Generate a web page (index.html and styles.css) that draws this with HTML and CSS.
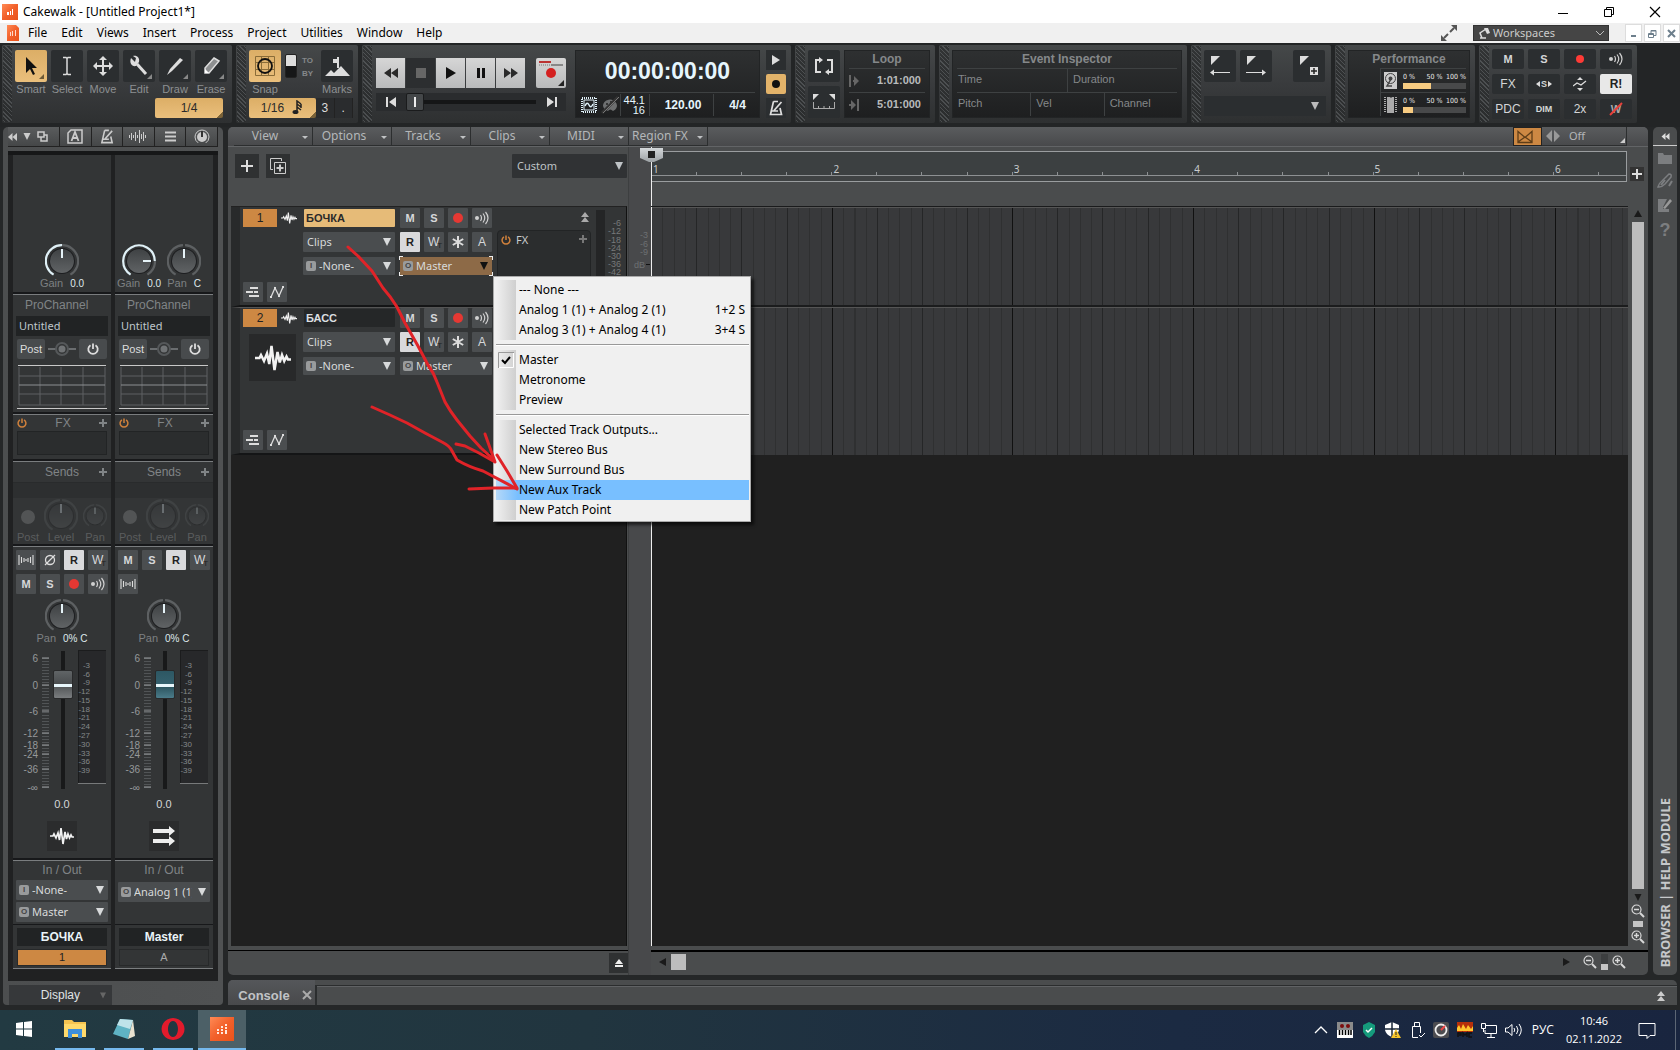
FILE: index.html
```html
<!DOCTYPE html>
<html lang="en">
<head>
<meta charset="utf-8">
<title>Cakewalk - [Untitled Project1*]</title>
<link rel="stylesheet" href="styles.css">
</head>
<body>
<svg class="defs" aria-hidden="true">
  <defs>
    <linearGradient id="g-dial" x1="0" y1="0" x2="0" y2="1"><stop offset="0" stop-color="#3f4244"/><stop offset="1" stop-color="#606365"/></linearGradient>
    <linearGradient id="g-app" x1="0" y1="0" x2="1" y2="1"><stop offset="0" stop-color="#ff8a55"/><stop offset=".5" stop-color="#f2602a"/><stop offset="1" stop-color="#e9531a"/></linearGradient>
    <linearGradient id="g-head" x1="0" y1="0" x2="0" y2="1"><stop offset="0" stop-color="#d4d8da"/><stop offset="1" stop-color="#9da2a5"/></linearGradient>
  </defs>
  <symbol id="knob-mid" viewBox="0 0 34 34"><path d="M17 1.2A15.8 15.8 0 0 1 25.4 30.6" fill="none" stroke="#5d6062" stroke-width="2.2"/><path d="M8.6 30.6A15.8 15.8 0 0 1 17 1.2" fill="none" stroke="#dff0f6" stroke-width="2.2"/><circle cx="17" cy="17" r="13" fill="#1d1e20"/><circle cx="17" cy="17" r="12" fill="url(#g-dial)"/><path d="M17 5v9" stroke="#e6f3f8" stroke-width="2"/></symbol>
  <symbol id="knob-right" viewBox="0 0 34 34"><path d="M33 17A15.8 15.8 0 0 1 25.4 30.6" fill="none" stroke="#5d6062" stroke-width="2.2"/><path d="M8.6 30.6A15.8 15.8 0 1 1 32.8 17" fill="none" stroke="#dff0f6" stroke-width="2.2"/><circle cx="17" cy="17" r="13" fill="#1d1e20"/><circle cx="17" cy="17" r="12" fill="url(#g-dial)"/><path d="M21 17h8" stroke="#e6f3f8" stroke-width="2"/></symbol>
  <symbol id="knob-pan" viewBox="0 0 34 34"><path d="M18 1.2A15.8 15.8 0 0 1 25.4 30.6M8.6 30.6A15.8 15.8 0 0 1 16 1.2" fill="none" stroke="#5d6062" stroke-width="2.2"/><circle cx="17" cy="17" r="13" fill="#1d1e20"/><circle cx="17" cy="17" r="12" fill="url(#g-dial)"/><path d="M17 5v9" stroke="#e6f3f8" stroke-width="2"/></symbol>
  <symbol id="wave" viewBox="0 0 24 20"><path d="M0 10h3l1-2 2 4 2-5 1.500 7L11 2l2 16 2-12 1.500 7 1.500-5 1.500 4 1.500-3 1 2h2" fill="none" stroke="#f2f2f2" stroke-width="1.700"/></symbol>
  <symbol id="echo" viewBox="0 0 16 14"><circle cx="3" cy="7" r="2" fill="#d0d0d0"/><path d="M6.500 4q2 3 0 6M9 2.500q3.500 4.500 0 9M11.500 1q5 6 0 12" fill="none" stroke="#d0d0d0" stroke-width="1.200"/></symbol>
  <symbol id="interleave" viewBox="0 0 16 10"><path d="M1 0v10M15 0v10M3.500 2v6M12.500 2v6M6 3v4M10 3v4M8 4v2" stroke="#dcdcdc" stroke-width="1.100"/></symbol>
  <symbol id="power" viewBox="0 0 12 12"><path d="M3.500 2.200a4.700 4.700 0 1 0 5 0M6 .5v5.500" fill="none" stroke="currentColor" stroke-width="1.800"/></symbol>
  <symbol id="plus" viewBox="0 0 8 8"><path d="M4 0v8M0 4h8" stroke="currentColor" stroke-width="2"/></symbol>
  <symbol id="tri" viewBox="0 0 8 8"><path d="M0 0h8L4 8z" fill="currentColor"/></symbol>
  <symbol id="metro" viewBox="0 0 14 16"><path d="M4.500 1.500h4.500M4.500 1.500L1.500 14.500h11L11 8M5 10.500L12.500 2M3 11h6" fill="none" stroke="currentColor" stroke-width="1.700"/></symbol>
  <symbol id="back2" viewBox="0 0 16 14"><path d="M8 0v14L0 7zM16 0v14L8 7z" fill="currentColor"/></symbol>
  <symbol id="up2" viewBox="0 0 8 10"><path d="M0 5h8L4 0zM0 10h8L4 5z" fill="currentColor"/></symbol>
  <symbol id="takes" viewBox="0 0 14 12"><path d="M4 2h8M0 6h7M8 6h4M3 10h10" stroke="#ddd" stroke-width="2"/></symbol>
  <symbol id="auto" viewBox="0 0 14 12"><path d="M1 11L5 2l4 8 4-9" fill="none" stroke="#ddd" stroke-width="1.300"/><path d="M0 10h2v2H0zM4 1h2v2H4zM8 9h2v2H8zM12 0h2v2h-2z" fill="#ddd"/></symbol>
  <symbol id="star" viewBox="0 0 12 12"><path d="M6 0v12M.8 3l10.400 6M.8 9l10.400-6" stroke="#ddd" stroke-width="2"/></symbol>
  <symbol id="zoomout" viewBox="0 0 14 14"><circle cx="5.500" cy="5.500" r="4.500" fill="none" stroke="#d8d8d8" stroke-width="1.200"/><path d="M3 5.500h5" stroke="#d8d8d8" stroke-width="1.500"/><path d="M9 9l4 4" stroke="#d8d8d8" stroke-width="2"/></symbol>
  <symbol id="zoomin" viewBox="0 0 14 14"><circle cx="5.500" cy="5.500" r="4.500" fill="none" stroke="#d8d8d8" stroke-width="1.200"/><path d="M3 5.500h5M5.500 3v5" stroke="#d8d8d8" stroke-width="1.500"/><path d="M9 9l4 4" stroke="#d8d8d8" stroke-width="2"/></symbol>
  <symbol id="eq" viewBox="0 0 90 44"><path d="M1 0h88v1H1zM0 43h90v1H0z" fill="#c8c8c8"/><path d="M2 2v38h86V2M2 11h86M2 29h86M23 2v38M44 2v38M66 2v38" fill="none" stroke="#5f6162"/><path d="M2 20h86" stroke="#8d9092"/></symbol>
  <symbol id="route" viewBox="0 0 28 14"><path d="M0 7h8M20 7h8" stroke="#6a6d6f" stroke-width="2"/><circle cx="14" cy="7" r="6" fill="none" stroke="#55585a" stroke-width="2"/><circle cx="14" cy="7" r="3.500" fill="#707375"/></symbol>
</svg>

<header class="titlebar">
  <svg width="16" height="16" viewBox="0 0 16 16"><path d="M0 0h16v16H0z" fill="url(#g-app)"/><path d="M5 8h2v3H5zM8 7h1v4H8zM10 5h1v6h-1z" fill="#fff"/></svg>
  <h1>Cakewalk - [Untitled Project1*]</h1>
  <div class="winbtns">
    <button aria-label="Minimize"><svg width="12" height="12"><path d="M1 7.500h10" stroke="#000"/></svg></button>
    <button aria-label="Restore"><svg width="12" height="12" fill="none" stroke="#000"><path d="M1.500 3.500h7v7h-7zM3.500 3V1.500h7v7H9"/></svg></button>
    <button aria-label="Close"><svg width="12" height="12"><path d="M1 1l10 10M11 1L1 11" stroke="#000" stroke-width="1.200"/></svg></button>
  </div>
</header>

<nav class="menubar">
  <svg width="12" height="16" viewBox="0 0 12 16"><path d="M0 0h9l3 3v13H0z" fill="url(#g-app)"/><path d="M3 7h1v4H3zM5 6h1v5H5zM8 5h1v6H8z" fill="#ffd9c8"/></svg>
  <a href="#file">File</a><a href="#edit">Edit</a><a href="#views">Views</a><a href="#insert">Insert</a><a href="#process">Process</a><a href="#project">Project</a><a href="#utilities">Utilities</a><a href="#window">Window</a><a href="#help">Help</a>
  <div class="menu-right">
    <svg width="16" height="16"><path d="M10 0h6v6zM0 10v6h6z" fill="#555"/><path d="M3 13l4-4M9 7l4-4" stroke="#555" stroke-width="2"/></svg>
    <button class="workspaces"><svg width="12" height="12"><path d="M2 11h6M4 11L2 6l6-4" stroke="#ddd" stroke-width="1.500" fill="none"/><path d="M6 1l4 0 2 5-3 1z" fill="#ddd"/></svg><span>Workspaces</span><svg width="8" height="6"><path d="M0 1l4 4 4-4" fill="none" stroke="#bbb"/></svg></button>
    <div class="mdi">
      <button aria-label="Minimize document"><svg width="9" height="9"><path d="M2 7h5" stroke="#6d7f8c" stroke-width="2"/></svg></button>
      <button aria-label="Restore document"><svg width="9" height="9" fill="none" stroke="#6d7f8c"><path d="M.5 4.500h5v4h-5zM.5 5.500h5M3 4V1.500h5v5H6M3 2h5"/></svg></button>
      <button aria-label="Close document"><svg width="9" height="9"><path d="M1 1l7 7M8 1L1 8" stroke="#6d7f8c" stroke-width="2"/></svg></button>
    </div>
  </div>
</nav>

<section class="toolbar" aria-label="Control bar">
  <div class="module m-tools">
    <div class="tools">
      <button class="tool on"><i><svg width="32" height="32"><path d="M11 7v16l4-4 3 6 2-1-3-6h5z" fill="#111"/><path d="M29 24v5h-5z" fill="#6e5a36"/></svg></i>Smart</button>
      <button class="tool"><i><svg width="32" height="32"><path d="M12 7.500h3l1 1 1-1h3M12 24.500h3l1-1 1 1h3M16 8v16" fill="none" stroke="#ddd" stroke-width="1.500"/></svg></i>Select</button>
      <button class="tool"><i><svg width="32" height="32"><path d="M16 9v14M9 16h14" stroke="#ddd" stroke-width="2"/><path d="M16 6l4 4h-8zM16 26l4-4h-8zM6 16l4-4v8zM26 16l-4-4v8z" fill="#ddd"/></svg></i>Move</button>
      <button class="tool"><i><svg width="32" height="32"><path d="M14 14l9 10" stroke="#ddd" stroke-width="3"/><path d="M8 8l4 4 1-4-3-2c4-1 7 2 6 6l-3 4c-4 1-7-3-5-8z" fill="#ddd"/><path d="M29 24v5h-5z" fill="#888"/></svg></i>Edit</button>
      <button class="tool"><i><svg width="32" height="32"><path d="M21 8l3 2L13 21l-5 4 3-6z" fill="#ddd"/><path d="M29 24v5h-5z" fill="#888"/></svg></i>Draw</button>
      <button class="tool"><i><svg width="32" height="32"><path d="M19 8l5 3-10 12h-4l0-5z" fill="#8d8f90" stroke="#ddd" stroke-width="1.500"/><path d="M10 19l4 4h-4z" fill="#fff"/><path d="M29 24v5h-5z" fill="#888"/></svg></i>Erase</button>
    </div>
    <button class="amber quarter">1/4</button>
  </div>
  <div class="module m-snap">
    <div class="tools">
      <button class="tool on"><i><svg width="32" height="32" fill="none"><path d="M6.500 6.500h19v19h-19zM12.500 6v20M19.500 6v20M6 12.500h20M6 19.500h20" stroke="#8a6c38"/><circle cx="16" cy="16" r="7" stroke="#111" stroke-width="1.800"/></svg></i>Snap</button>
      <div class="toby"><span class="sw"></span><p>TO<br>BY</p></div>
      <button class="tool"><i><svg width="32" height="32"><path d="M4 26l6-6 3 3 7-7 9 10z" fill="#ddd"/><path d="M12 9h6v4h-6zM16 7h2v11h-2z" fill="#ddd"/></svg></i>Marks</button>
    </div>
    <div class="snaprow"><button class="amber">1/16 <svg width="12" height="16"><path d="M5 12V1l4 3M5 4l4 3M9 4v4M5 7l4 3" stroke="#222" fill="none" stroke-width="1.500"/><ellipse cx="3.500" cy="12" rx="3" ry="2" fill="#222"/></svg></button><button class="dark">3</button><button class="dark">.</button></div>
  </div>
  <div class="module m-transport">
    <div class="trans">
      <div class="row">
        <button aria-label="Rewind"><svg width="14" height="10"><path d="M7 0v10L0 5zM14 0v10L7 5z" fill="#2a2a2a"/></svg></button>
        <button class="stop" aria-label="Stop"><svg width="10" height="10"><path d="M0 0h10v10H0z" fill="#666"/></svg></button>
        <button aria-label="Play"><svg width="10" height="12"><path d="M0 0l10 6-10 6z" fill="#111"/></svg></button>
        <button aria-label="Pause"><svg width="8" height="10"><path d="M0 0h3v10H0zM5 0h3v10H5z" fill="#111"/></svg></button>
        <button aria-label="Forward"><svg width="14" height="10"><path d="M0 0v10l7-5zM7 0v10l7-5z" fill="#2a2a2a"/></svg></button>
        <button class="rec" aria-label="Record"><svg width="30" height="30"><path d="M3 3h12v2H3z" fill="#b33"/><path d="M15 6h12v2H15z" fill="#888"/><path d="M3 7h12" stroke="#777" stroke-dasharray="1 1"/><circle cx="15" cy="15" r="5" fill="#d42020"/><path d="M28 22v6h-6z" fill="#222"/></svg></button>
      </div>
      <div class="row seek">
        <button aria-label="Go to start"><svg width="10" height="10"><path d="M0 0h2v10H0zM10 0v10L3 5z" fill="#ddd"/></svg></button>
        <input type="range" class="seekbar" aria-label="Position" value="0">
        <button aria-label="Go to end"><svg width="10" height="10"><path d="M8 0h2v10H8zM0 0v10l7-5z" fill="#ddd"/></svg></button>
      </div>
    </div>
    <div class="lcd clock">
      <div class="time">00:00:00:00</div>
      <div class="clockrow">
        <span class="c-icons"><svg width="16" height="16"><path d="M1 1h14v14H1z" fill="none" stroke="#dff0f8" stroke-width="2" stroke-dasharray="1 1"/><path d="M3 3h10v10H3z" fill="none" stroke="#dff0f8"/><path d="M4 9q2-5 4-1t4-1" fill="none" stroke="#dff0f8" stroke-width="1.500"/></svg><svg width="18" height="18"><path d="M2 10a7 6 0 1 1 10 5q-3-3-5 0-4-1-5-5z" fill="#6d6f70"/><circle cx="6" cy="8" r="1" fill="#222"/><circle cx="10" cy="6" r="1" fill="#222"/><path d="M1 17L17 1" stroke="#333" stroke-width="3"/><path d="M2 17L18 1" stroke="#777"/></svg></span>
        <span class="c-rate">44.1<br>16</span><span class="c-tempo">120.00</span><span class="c-sig">4/4</span>
      </div>
    </div>
    <div class="side">
      <button aria-label="Audio engine"><svg width="8" height="10"><path d="M0 0l8 5-8 5z" fill="#ddd"/></svg></button>
      <button class="amber" aria-label="Record metronome"><svg width="10" height="10"><circle cx="5" cy="5" r="4" fill="#111"/></svg></button>
      <button aria-label="Metronome"><svg width="14" height="16" color="#ddd"><use href="#metro"/></svg></button>
    </div>
  </div>
  <div class="module m-loop">
    <div class="col2">
      <button class="sq" aria-label="Loop"><svg width="20" height="18" fill="none" stroke="#ddd" stroke-width="2"><path d="M6 3H2v12h5M14 15h4V3h-5"/><path d="M5 0l4 3-4 3zM15 12l-4 3 4 3z" fill="#ddd" stroke="none"/></svg></button>
      <button class="sq" aria-label="Set loop"><svg width="22" height="16"><path d="M0 0h6L0 6zM22 0h-6l6 6z" fill="#ddd"/><path d="M.5 8v6.500h21V8M5.500 12v3M11 12v3M16.500 12v3" stroke="#aaa" fill="none"/></svg></button>
    </div>
    <div class="lcd">
      <h2>Loop</h2>
      <div class="lrow"><svg width="10" height="12"><path d="M1 0v12M4 6h3" stroke="#666" stroke-width="2"/><path d="M5 1l5 5-5 5z" fill="#666"/></svg>1:01:000</div>
      <div class="lrow"><svg width="10" height="12"><path d="M9 0v12M0 6h3" stroke="#666" stroke-width="2"/><path d="M2 1l5 5-5 5z" fill="#666"/></svg>5:01:000</div>
    </div>
  </div>
  <div class="module m-event">
    <div class="lcd">
      <h2>Event Inspector</h2>
      <div class="erow two"><span>Time</span><span>Duration</span></div>
      <div class="erow three"><span>Pitch</span><span>Vel</span><span>Channel</span></div>
    </div>
  </div>
  <div class="module m-marker">
    <div class="tools">
      <button class="sq" aria-label="Previous marker"><svg width="20" height="20"><path d="M1 0h9L1 9z" fill="#ddd"/><path d="M2 16.500h18" stroke="#ddd"/><path d="M0 16.500l4-3v6z" fill="#ddd"/></svg></button>
      <button class="sq" aria-label="Next marker"><svg width="20" height="20"><path d="M1 0h9L1 9z" fill="#ddd"/><path d="M0 16.500h18" stroke="#ddd"/><path d="M20 16.500l-4-3v6z" fill="#ddd"/></svg></button>
      <button class="sq last" aria-label="Add marker"><svg width="20" height="20"><path d="M1 0h9L1 9z" fill="#ddd"/><path d="M11 11h8v8h-8z" fill="#ddd"/><path d="M15 12v6M12 15h6" stroke="#222" stroke-width="1.500"/></svg></button>
    </div>
    <button class="markersel" aria-label="Markers"><svg width="8" height="8" color="#bbb"><use href="#tri"/></svg></button>
  </div>
  <div class="module m-perf">
    <div class="lcd">
      <h2>Performance</h2>
      <div class="prow"><svg width="13" height="17"><path d="M0 0h13v17H0z" fill="#ccc"/><circle cx="6.500" cy="6.500" r="5" fill="none" stroke="#444"/><circle cx="6.500" cy="6.500" r="2" fill="#444"/><path d="M7 7l-4 7h5" stroke="#444" fill="none" stroke-width="1.500"/></svg><div><p><span>0 %</span><span>50 %</span><span>100 %</span></p><div class="bar"><span style="width:45%"></span></div></div></div>
      <div class="prow"><svg width="13" height="17"><path d="M3 1h3l1 1 1-1h2v16H3z" fill="#aaa"/><path d="M1 1v16M12 1v16" stroke="#aaa" stroke-width="2" stroke-dasharray="1 1"/></svg><div><p><span>0 %</span><span>50 %</span><span>100 %</span></p><div class="bar"><span style="width:16%"></span></div></div></div>
    </div>
  </div>
  <div class="module m-mix">
    <button>M</button><button>S</button><button aria-label="Arm"><svg width="10" height="10"><circle cx="5" cy="5" r="4" fill="#ff3b36"/></svg></button><button aria-label="Input echo"><svg width="16" height="14"><use href="#echo"/></svg></button>
    <button class="fx">FX</button><button class="tiny"><svg width="4" height="6"><path d="M4 0v6L0 3z" fill="#ddd"/></svg>S<svg width="4" height="6"><path d="M0 0v6l4-3z" fill="#ddd"/></svg></button><button aria-label="Automation"><svg width="14" height="14"><path d="M7 0l3 3H4zM7 14l3-3H4z" fill="#ddd"/><path d="M0 9l4-3 4 2 5-4" fill="none" stroke="#ddd" stroke-width="1.300"/></svg></button><button class="white">R!</button>
    <button class="fx">PDC</button><button class="tiny">DIM</button><button class="fx">2x</button><button class="struck">W<svg width="14" height="14"><path d="M1 13L13 1" stroke="#e8403c" stroke-width="2"/></svg></button>
  </div>
</section>

<main class="work">
  <aside class="inspector" aria-label="Inspector">
    <div class="insp-tabs">
      <button class="wide" aria-label="Collapse"><svg width="9" height="8"><use href="#back2"/></svg><svg width="8" height="7"><use href="#tri"/></svg><svg width="11" height="11" fill="none" stroke="currentColor" stroke-width="1.500"><path d="M1 1h6v5H1zM4 6v4h6V4H7"/></svg></button>
      <button aria-label="Arpeggiator"><svg width="16" height="15"><path d="M4 1h11v13H1V4z" fill="none" stroke="currentColor" stroke-width="1.500"/><path d="M4.500 12L8 3l3.500 9M6 9h4" fill="none" stroke="currentColor" stroke-width="1.800"/></svg></button>
      <button aria-label="Metronome"><svg width="14" height="15"><use href="#metro"/></svg></button>
      <button aria-label="Clip"><svg width="18" height="13"><path d="M.5 5v3M2.500 3v7M4.500 5v3M6.500 2v9M8.500 5v3M10.500 0v13M12.500 4v5M14.500 2v9M16.500 5v3" stroke="currentColor"/></svg></button>
      <button aria-label="Track"><svg width="11" height="11"><path d="M0 1.500h11M0 5.500h11M0 9.500h11" stroke="currentColor" stroke-width="2"/></svg></button>
      <button aria-label="ProChannel"><svg width="16" height="16"><circle cx="8" cy="8" r="5" fill="currentColor"/><circle cx="8" cy="8" r="7" fill="none" stroke="currentColor" stroke-dasharray="36 8" stroke-dashoffset="-15"/><path d="M8 2v6" stroke="#333" stroke-width="2"/></svg></button>
    </div>
    <div class="strips">
      <article class="strip">
        <section class="s-gain"><div class="knobs"><figure><svg width="34" height="34"><use href="#knob-mid"/></svg><figcaption>Gain<b>0.0</b></figcaption></figure></div></section>
        <section class="s-pro"><h3>ProChannel</h3><div class="preset">Untitled</div><div class="prorow"><button>Post</button><svg width="28" height="14"><use href="#route"/></svg><button aria-label="ProChannel power"><svg width="12" height="12"><use href="#power"/></svg></button></div><svg class="eq" width="90" height="44"><use href="#eq"/></svg></section>
        <section class="s-fx"><div class="shead"><svg width="10" height="10" color="#d0813c"><use href="#power"/></svg><span>FX</span><svg width="8" height="8"><use href="#plus"/></svg></div><div class="well"></div></section>
        <section class="s-sends"><div class="shead"><i></i><span>Sends</span><svg width="8" height="8"><use href="#plus"/></svg></div><div class="dim"></div><div class="sendrow"><figure><svg width="14" height="14"><circle cx="7" cy="7" r="7" fill="#9a9c9e"/></svg><figcaption>Post</figcaption></figure><figure><svg width="34" height="34"><use href="#knob-pan"/></svg><figcaption>Level</figcaption></figure><figure><svg width="24" height="24"><use href="#knob-pan"/></svg><figcaption>Pan</figcaption></figure></div></section>
        <section class="s-mix">
          <div class="btngrid"><button aria-label="Interleave"><svg width="16" height="10"><use href="#interleave"/></svg></button><button aria-label="Phase"><svg width="12" height="12" fill="none" stroke="#ddd" stroke-width="1.300"><circle cx="6" cy="6" r="4.500"/><path d="M1 11L11 1"/></svg></button><button class="white">R</button><button class="w">W<sub>T</sub></button><button>M</button><button>S</button><button aria-label="Record arm"><svg width="10" height="10"><circle cx="5" cy="5" r="5" fill="#e53833"/></svg></button><button aria-label="Input echo"><svg width="16" height="14"><use href="#echo"/></svg></button></div>
          <figure class="pan"><svg width="34" height="34"><use href="#knob-pan"/></svg><figcaption>Pan<b>0% C</b></figcaption></figure>
          <div class="faderrow">
            <svg width="40" height="142"><path d="M32.500 8v130" stroke="#515456" stroke-width="7" stroke-dasharray="1 2"/><path d="M29 8h7M29 35h7M29 61h7M29 83h7M29 95h7M29 104h7M29 119h7M29 137h7" stroke="#9a9d9f"/><g class="scale-text"><text x="25" y="12">6</text><text x="25" y="39">0</text><text x="25" y="65">-6</text><text x="25" y="87">-12</text><text x="25" y="99">-18</text><text x="25" y="108">-24</text><text x="25" y="123">-36</text><text x="25" y="141">-∞</text></g></svg>
            <input type="range" class="fader" aria-label="Volume" value="83">
            <svg class="mtr" width="28" height="134"><path d="M0 0h28v134H0z" fill="#27282a"/><path d="M0 133.500h28" stroke="#77797a"/><path d="M.5 0v133M0 .5h28" stroke="#1b1c1d"/><g class="meter-text"><text x="12" y="18">-3</text><text x="12" y="27">-6</text><text x="12" y="35">-9</text><text x="12" y="44">-12</text><text x="12" y="53">-15</text><text x="12" y="62">-18</text><text x="12" y="70">-21</text><text x="12" y="79">-24</text><text x="12" y="88">-27</text><text x="12" y="97">-30</text><text x="12" y="106">-33</text><text x="12" y="114">-36</text><text x="12" y="123">-39</text></g></svg>
          </div>
          <output>0.0</output>
          <div class="trackicon"><svg width="24" height="20"><use href="#wave"/></svg></div>
        </section>
        <section class="s-io"><h3>In / Out</h3>
          <label class="combo"><span class="badge">I</span><select aria-label="Input"><option>-None-</option></select><svg width="8" height="8"><use href="#tri"/></svg></label>
          <label class="combo"><span class="badge">O</span><select aria-label="Output"><option>Master</option></select><svg width="8" height="8"><use href="#tri"/></svg></label>
        </section>
        <section class="s-name"><strong>БОЧКА</strong><span class="num orange">1</span></section>
      </article>
      <article class="strip">
        <section class="s-gain"><div class="knobs pair"><figure><svg width="34" height="34"><use href="#knob-right"/></svg><figcaption>Gain<b>0.0</b></figcaption></figure><figure><svg width="34" height="34"><use href="#knob-pan"/></svg><figcaption>Pan<b>C</b></figcaption></figure></div></section>
        <section class="s-pro"><h3>ProChannel</h3><div class="preset">Untitled</div><div class="prorow"><button>Post</button><svg width="28" height="14"><use href="#route"/></svg><button aria-label="ProChannel power"><svg width="12" height="12"><use href="#power"/></svg></button></div><svg class="eq" width="90" height="44"><use href="#eq"/></svg></section>
        <section class="s-fx"><div class="shead"><svg width="10" height="10" color="#d0813c"><use href="#power"/></svg><span>FX</span><svg width="8" height="8"><use href="#plus"/></svg></div><div class="well"></div></section>
        <section class="s-sends"><div class="shead"><i></i><span>Sends</span><svg width="8" height="8"><use href="#plus"/></svg></div><div class="dim"></div><div class="sendrow"><figure><svg width="14" height="14"><circle cx="7" cy="7" r="7" fill="#9a9c9e"/></svg><figcaption>Post</figcaption></figure><figure><svg width="34" height="34"><use href="#knob-pan"/></svg><figcaption>Level</figcaption></figure><figure><svg width="24" height="24"><use href="#knob-pan"/></svg><figcaption>Pan</figcaption></figure></div></section>
        <section class="s-mix">
          <div class="btngrid"><button>M</button><button>S</button><button class="white">R</button><button class="w">W<sub>T</sub></button><button aria-label="Interleave"><svg width="16" height="10"><use href="#interleave"/></svg></button></div>
          <figure class="pan"><svg width="34" height="34"><use href="#knob-pan"/></svg><figcaption>Pan<b>0% C</b></figcaption></figure>
          <div class="faderrow">
            <svg width="40" height="142"><path d="M32.500 8v130" stroke="#515456" stroke-width="7" stroke-dasharray="1 2"/><path d="M29 8h7M29 35h7M29 61h7M29 83h7M29 95h7M29 104h7M29 119h7M29 137h7" stroke="#9a9d9f"/><g class="scale-text"><text x="25" y="12">6</text><text x="25" y="39">0</text><text x="25" y="65">-6</text><text x="25" y="87">-12</text><text x="25" y="99">-18</text><text x="25" y="108">-24</text><text x="25" y="123">-36</text><text x="25" y="141">-∞</text></g></svg>
            <input type="range" class="fader teal" aria-label="Volume" value="83">
            <svg class="mtr" width="28" height="134"><path d="M0 0h28v134H0z" fill="#27282a"/><path d="M0 133.500h28" stroke="#77797a"/><path d="M.5 0v133M0 .5h28" stroke="#1b1c1d"/><g class="meter-text"><text x="12" y="18">-3</text><text x="12" y="27">-6</text><text x="12" y="35">-9</text><text x="12" y="44">-12</text><text x="12" y="53">-15</text><text x="12" y="62">-18</text><text x="12" y="70">-21</text><text x="12" y="79">-24</text><text x="12" y="88">-27</text><text x="12" y="97">-30</text><text x="12" y="106">-33</text><text x="12" y="114">-36</text><text x="12" y="123">-39</text></g></svg>
          </div>
          <output>0.0</output>
          <div class="trackicon"><svg width="24" height="20"><path d="M1 3h16V0l6 5-6 5V7H1zM1 13h16v-3l6 5-6 5v-3H1z" fill="#eee"/></svg></div>
        </section>
        <section class="s-io single"><h3>In / Out</h3>
          <label class="combo"><span class="badge">O</span><select aria-label="Output"><option>Analog 1 (1) + Analog 2 (1)</option></select><svg width="8" height="8"><use href="#tri"/></svg></label>
        </section>
        <section class="s-name"><strong>Master</strong><span class="num">A</span></section>
      </article>
    </div>
    <button class="display">Display<svg width="6" height="7" color="#666"><use href="#tri"/></svg></button>
  </aside>

  <section class="tracks" aria-label="Track view">
    <div class="tv-menu">
      <button>View</button><button>Options</button><button>Tracks</button><button>Clips</button><button>MIDI</button><button>Region FX</button>
      <div class="tv-right"><button class="xfade" aria-label="Crossfade"><svg width="16" height="14"><path d="M1 1.500l7 6 7-6v11H1zM1 12l7-5 7 5" fill="none" stroke="#5e3d18" stroke-width="1.300"/></svg></button><button class="off"><svg width="14" height="14"><path d="M6 1v12L0 7zM8 1v12l6-6z" fill="#999"/></svg><span>Off</span><svg class="corner" width="5" height="5"><path d="M5 0v5H0z" fill="#ccc"/></svg></button></div>
    </div>
    <div class="tv-grid">
      <div class="th-left">
        <button aria-label="Add track"><svg width="12" height="12"><path d="M6 0v12M0 6h12" stroke="#ddd" stroke-width="2"/></svg></button>
        <button aria-label="Duplicate track"><svg width="16" height="16" fill="none" stroke="#ccc"><path d="M4.500 4.500h11v11h-11zM3 11.500H.5V.5h11V3"/><path d="M10 6.500v7M6.500 10h7" stroke-width="2"/></svg></button>
        <label class="combo custom"><select aria-label="Track control preset"><option>Custom</option></select><svg width="8" height="8"><use href="#tri"/></svg></label>
      </div>
      <div class="gutter">
        <svg width="23" height="130"><g class="gut-text"><text x="19" y="12">-3</text><text x="19" y="21">-6</text><text x="19" y="29">-9</text><text x="16" y="42">dB</text></g><path d="M17 38.500h4" stroke="#111"/></svg>
      </div>
      <div class="ruler">
        <div class="rscale"><span>1</span><span>2</span><span>3</span><span>4</span><span>5</span><span>6</span></div>
        <svg class="playhead" width="23" height="15"><path d="M0 0h23v10l-9 4h-5l-9-4z" fill="url(#g-head)"/><path d="M8 3h7v7H8z" fill="#222"/></svg>
      </div>
      <div class="th-right"><button aria-label="Add lane"><svg width="10" height="10"><path d="M5 0v10M0 5h10" stroke="#ddd" stroke-width="2"/></svg></button></div>

      <div class="tlist">
        <article class="track t1">
          <div class="tcontrols">
            <div class="tidx"><span class="tnum">1</span><svg width="16" height="14"><use href="#wave"/></svg></div>
            <input class="tname sel" aria-label="Track 1 name" value="БОЧКА">
            <div class="tb"><button>M</button><button>S</button><button aria-label="Record arm"><svg width="10" height="10"><circle cx="5" cy="5" r="5" fill="#e53833"/></svg></button><button aria-label="Input echo"><svg width="16" height="14"><use href="#echo"/></svg></button></div>
            <i></i>
            <label class="combo"><select aria-label="Edit filter"><option>Clips</option></select><svg width="8" height="8"><use href="#tri"/></svg></label>
            <div class="tb"><button class="white">R</button><button class="w">W<sub>T</sub></button><button aria-label="Freeze"><svg width="12" height="12"><use href="#star"/></svg></button><button class="reg">A</button></div>
            <i></i>
            <label class="combo io"><span class="badge">I</span><select aria-label="Input"><option>-None-</option></select><svg width="8" height="8"><use href="#tri"/></svg></label>
            <div class="outwrap">
              <label class="combo io open"><span class="badge">O</span><select aria-label="Output"><option>Master</option></select><svg width="8" height="8"><use href="#tri"/></svg></label>
              <ul class="popup" role="menu">
                <li role="menuitem">--- None ---</li>
                <li role="menuitem">Analog 1 (1) + Analog 2 (1)<span>1+2 S</span></li>
                <li role="menuitem">Analog 3 (1) + Analog 4 (1)<span>3+4 S</span></li>
                <li class="sep" role="separator"></li>
                <li class="checked" role="menuitem"><svg width="16" height="16" viewBox="0 0 16 16"><path d="M.5 16V.5H16" fill="none" stroke="#999"/><path d="M15.500 1v14.500H1" fill="none" stroke="#fff"/><path d="M4 8l3 3 5-6" fill="none" stroke="#000" stroke-width="2"/></svg>Master</li>
                <li role="menuitem">Metronome</li>
                <li role="menuitem">Preview</li>
                <li class="sep" role="separator"></li>
                <li role="menuitem">Selected Track Outputs...</li>
                <li role="menuitem">New Stereo Bus</li>
                <li role="menuitem">New Surround Bus</li>
                <li class="hot" role="menuitem">New Aux Track</li>
                <li role="menuitem">New Patch Point</li>
              </ul>
            </div>
            <div class="lanes"><button aria-label="Take lanes"><svg width="14" height="12"><use href="#takes"/></svg></button><button aria-label="Automation lanes"><svg width="14" height="12"><use href="#auto"/></svg></button></div>
          </div>
          <div class="fxcol"><svg class="up" width="8" height="10" color="#aaa"><use href="#up2"/></svg><div class="fxbin"><svg width="10" height="10" color="#d0813c"><use href="#power"/></svg><span>FX</span><svg width="8" height="8" color="#777"><use href="#plus"/></svg></div></div>
          <svg class="tmeter" width="32" height="94"><path d="M2 2h9v92H2z" fill="#242526"/><g class="gut-text"><text x="27" y="18">-6</text><text x="27" y="26">-12</text><text x="27" y="35">-18</text><text x="27" y="43">-24</text><text x="27" y="51">-30</text><text x="27" y="59">-36</text><text x="27" y="67">-42</text></g></svg>
        </article>
        <article class="track t2">
          <div class="tcontrols">
            <div class="tidx"><span class="tnum">2</span><svg width="16" height="14"><use href="#wave"/></svg></div>
            <input class="tname" aria-label="Track 2 name" value="БАСС">
            <div class="tb"><button>M</button><button>S</button><button aria-label="Record arm"><svg width="10" height="10"><circle cx="5" cy="5" r="5" fill="#e53833"/></svg></button><button aria-label="Input echo"><svg width="16" height="14"><use href="#echo"/></svg></button></div>
            <div class="bigicon"><svg width="36" height="30"><use href="#wave"/></svg></div>
            <label class="combo"><select aria-label="Edit filter"><option>Clips</option></select><svg width="8" height="8"><use href="#tri"/></svg></label>
            <div class="tb"><button class="white">R</button><button class="w">W<sub>T</sub></button><button aria-label="Freeze"><svg width="12" height="12"><use href="#star"/></svg></button><button class="reg">A</button></div>
            <label class="combo io"><span class="badge">I</span><select aria-label="Input"><option>-None-</option></select><svg width="8" height="8"><use href="#tri"/></svg></label>
            <div class="outwrap"><label class="combo io"><span class="badge">O</span><select aria-label="Output"><option>Master</option></select><svg width="8" height="8"><use href="#tri"/></svg></label></div>
            <div class="lanes"><button aria-label="Take lanes"><svg width="14" height="12"><use href="#takes"/></svg></button><button aria-label="Automation lanes"><svg width="14" height="12"><use href="#auto"/></svg></button></div>
          </div>
        </article>
      </div>

      <div class="clips">
        <div class="lane l1"><i></i><i></i><i></i><i></i><i></i><i></i></div>
        <div class="lane l2"><i></i><i></i><i></i><i></i><i></i><i></i></div>
      </div>

      <div class="vscroll">
        <svg width="8" height="7"><path d="M0 7h8L4 0z" fill="#1a1a1a"/></svg>
        <div class="vthumb"></div>
        <svg width="8" height="7" color="#1a1a1a"><use href="#tri"/></svg>
        <button aria-label="Zoom out vertically"><svg width="14" height="14"><use href="#zoomout"/></svg></button><span class="zbox"></span><button aria-label="Zoom in vertically"><svg width="14" height="14"><use href="#zoomin"/></svg></button>
      </div>

      <div class="foot-left"><button aria-label="Show bus pane"><svg width="8" height="8"><path d="M0 5h8L4 0zM0 6h8v2H0z" fill="#eee"/></svg></button></div>
      <div class="foot-right"><svg width="7" height="8"><path d="M7 0v8L0 4z" fill="#1a1a1a"/></svg><span class="hthumb"></span><div class="hz"><svg width="7" height="8"><path d="M0 0v8l7-4z" fill="#1a1a1a"/></svg><button aria-label="Zoom out"><svg width="14" height="14"><use href="#zoomout"/></svg></button><span class="zslider"></span><button aria-label="Zoom in"><svg width="14" height="14"><use href="#zoomin"/></svg></button></div></div>
    </div>
    <svg class="scribble" width="190" height="260" viewBox="340 240 190 260" aria-hidden="true"><g fill="none" stroke="#e02328" stroke-width="3" stroke-linecap="round" stroke-linejoin="round"><path d="M348 247l10 9 14 15 11 17q8 9 14 19l8 16 13 23 10 19q6 8 9 17l8 20q5 9 12 18l13 16 11 12 12 11"/><path d="M485 434l5 14 5 14-16-9-14-7-9-2"/><path d="M372 407l18 8 17 8 18 10 17 9q8 4 10 9l5 9q12 7 26 11l34 18"/><path d="M469 489l24-1h24l-10-17-10-16"/></g></svg>
  </section>

  <aside class="browser" aria-label="Browser">
    <button aria-label="Expand browser"><svg width="9" height="7" color="#ddd"><use href="#back2"/></svg></button>
    <svg width="14" height="12"><path d="M0 1h5l1 2h8v9H0z" fill="#7c7e80"/></svg>
    <svg width="16" height="16"><path d="M1 14q1-4 4-6l7-7q3 0 2 3l-6 7q-3 3-6 3z" fill="none" stroke="#7c7e80" stroke-width="1.500"/><path d="M4 12l4-5M12 13l3-5" stroke="#7c7e80" stroke-width="2"/></svg>
    <svg width="14" height="14"><path d="M0 1h9L5 9v2h6V7v7H0z" fill="#7c7e80"/><path d="M5 10l7-9 2 2-7 8z" fill="#999"/></svg>
    <span class="q">?</span>
    <div class="vert">BROWSER | HELP MODULE</div>
  </aside>

  <footer class="console"><button>Console<svg width="10" height="10"><path d="M1 1l8 8M9 1L1 9" stroke="#aaa" stroke-width="2"/></svg></button><div><svg width="8" height="10" color="#ccc"><use href="#up2"/></svg></div></footer>
</main>

<footer class="taskbar">
  <button class="tk" aria-label="Start"><svg width="16" height="16"><path d="M0 2l7-1v6.500H0zM8 1l8-1v7.500H8zM0 8.500h7V15l-7-1zM8 8.500h8V16l-8-1z" fill="#fff"/></svg></button>
  <button class="tk run" aria-label="Explorer"><svg width="22" height="20"><path d="M0 1h8l2 2h12v15H0z" fill="#f5c451"/><path d="M0 5h22v13H0z" fill="#ffda6b"/><path d="M4 10h14v9h-4v-4H8v4H4z" fill="#3d8fdb"/></svg></button>
  <button class="tk run" aria-label="Notepad"><svg width="24" height="22"><path d="M8 1l13 1-5 19-15-5z" fill="#5fb3c4"/><path d="M8 1l13 1-3 9L5 7z" fill="#bfe3ea"/><path d="M21 2l2 16-7 3z" fill="#e8e2d0"/></svg></button>
  <button class="tk run" aria-label="Opera"><svg width="24" height="22"><path fill-rule="evenodd" d="M12 0a11.500 11 0 1 0 .1 0zM12 3a5 8 0 1 1-.1 0z" fill="#e31b2c"/></svg></button>
  <button class="tk run act" aria-label="Cakewalk"><svg width="24" height="24"><path d="M0 0h24v24H0z" fill="url(#g-app)"/><path d="M7 12h2v2H7zM7 15h2v2H7zM11 9h2v2h-2zM11 12h2v2h-2zM11 15h2v2h-2zM15 7h2v2h-2zM15 10h2v2h-2zM15 13h2v4h-2z" fill="#ffe8dd"/></svg></button>
  <div class="tray">
    <svg width="16" height="16"><path d="M2 11l6-6 6 6" fill="none" stroke="#fff" stroke-width="1.300"/></svg>
    <svg width="16" height="16"><path d="M0 0h16v8H0z" fill="#8b8b8b"/><path d="M0 8h16v8H0z" fill="#fff"/><circle cx="5" cy="4" r="2" fill="#7d0d0d"/><circle cx="11" cy="4" r="2" fill="#7d0d0d"/><path d="M2.500 8v5M5.500 8v5M8.500 8v5M11.500 8v5M14 8v5" stroke="#000" stroke-width="1.500"/></svg>
    <svg width="16" height="16"><path d="M8 0l6 3v7q-2 4-6 6-4-2-6-6V3z" fill="#159b7c"/><path d="M5 8l2 2 4-4" stroke="#fff" fill="none" stroke-width="1.500"/></svg>
    <svg width="16" height="16"><path d="M7 0l7 3v5q-1 5-7 7-6-2-7-7V3z" fill="#fff"/><path d="M7 0v15M0 7h14" stroke="#1a2738" stroke-width="1.500"/><path d="M11 7l5 9H6z" fill="#f7c52c"/><path d="M11 10v3M11 14v1" stroke="#222"/></svg>
    <svg width="16" height="16" fill="none" stroke="#fff"><path d="M5.500 4V.5h5V4M3.500 15.500v-11h8V11M3.500 15.500H9M10 13l2 2 4-4"/></svg>
    <svg width="16" height="16"><rect width="16" height="16" rx="2" fill="#4c4c50"/><circle cx="8" cy="8" r="5.500" fill="none" stroke="#eee" stroke-width="1.800"/><path d="M8 8l4-4" stroke="#e44" stroke-width="2"/></svg>
    <svg width="16" height="16"><path d="M0 0h16v10H0z" fill="#b6300a"/><path d="M0 9V6l2-3 2 4 2-5 3 5 2-4 3 4 2-3v5z" fill="#ffc62e"/><path d="M1 15v-4h3v2H2M6 15v-4l2 2 2-2v4M15 11h-3v4h3" stroke="#111" fill="none" stroke-width="1.500"/></svg>
    <svg width="16" height="16" fill="none" stroke="#fff"><path d="M5 3.500h10.500v8H4V8M10 12v3M6 15.500h8M.5 1.500h4v5h-4zM2.500 7v3"/></svg>
    <svg width="17" height="14" fill="none" stroke="#fff"><path d="M.5 5h2.500l4-3.500v11L3 9H.5zM9 5q1.500 2 0 4M11.500 3q3 4 0 8M14 1q4.500 6 0 12"/></svg>
    <span class="lang">РУС</span>
    <time>10:46<br>02.11.2022</time>
    <svg class="note" width="18" height="17" fill="none" stroke="#fff"><path d="M1 1.500h16v12h-5l-3 3v-3H1z"/></svg>
  </div>
</footer>
</body>
</html>
```
FILE: styles.css
```css
* { box-sizing: border-box; }
body {
  margin: 0;
  min-height: 100vh;
  display: grid;
  grid-template-rows: 23px 20px 84px 1fr 40px;
  grid-template-columns: minmax(0, 1fr);
  background: #252728;
  font: 11px/13px "Liberation Sans", Arial, sans-serif;
  color: #85888a;
}
.defs { position: absolute; width: 0; height: 0; }
button, select, input { font: inherit; color: inherit; border: 0; padding: 0; margin: 0; background: none; border-radius: 0; }
button { display: flex; align-items: center; justify-content: center; }
svg { display: block; flex: none; }
h1, h2, h3, p, figure, ul { margin: 0; padding: 0; font-weight: normal; }

/* title and menu */
.titlebar { display: flex; align-items: center; gap: 5px; padding: 0 2px; background: #fff; color: #000; }
.titlebar h1 { font: 12px/16px "Noto Sans", "Open Sans", sans-serif; flex: 1; }
.winbtns { display: flex; }
.winbtns button { width: 46px; height: 21px; }
.menubar { display: flex; align-items: center; gap: 14px; padding-left: 7px; background: #f0f0f0; font: 12px/18px "Noto Sans", sans-serif; color: #000; }
.menubar > svg { margin-right: -5px; }
.menubar a { color: #000; text-decoration: none; }
.menu-right { display: flex; align-items: center; gap: 16px; margin-left: auto; }
.workspaces { width: 136px; height: 16px; background: #454545; border: 1px solid #333; color: #ccc; font-size: 11px; gap: 3px; padding: 0 4px; }
.workspaces span { flex: 1; text-align: left; }
.mdi { display: flex; gap: 2px; }
.mdi button { width: 17px; height: 18px; background: #fff; border: 1px solid #ddd; }

/* control bar */
.toolbar { display: flex; gap: 4px; padding: 2px 2px 4px; background: #232526; }
.module {
  display: flex; position: relative; height: 78px; padding: 5px 5px 5px 13px; border-radius: 2px;
  background: linear-gradient(#454849, #393b3d 50%, #2e3031);
}
.module::before {
  content: ""; position: absolute; left: 1px; top: 1px; bottom: 1px; width: 9px;
  background: repeating-linear-gradient(45deg, #292b2c 0 1px, #55585a 1px 2px, #292b2c 2px 3px);
  opacity: .7;
}
.tools { display: flex; gap: 4px; }
.tool { flex-direction: column; justify-content: flex-start; width: 32px; gap: 1px; color: #8d9092; }
.tool i { display: flex; background: #2b2e30; border-radius: 2px; }
.tool.on i, .amber { background: linear-gradient(#dcae66, #eabf7c); border-radius: 2px; }
.m-tools, .m-snap { flex-direction: column; }
.m-tools { width: 230px; }
.quarter { width: 68px; }
.amber { height: 20px; color: #2a2a2a; font-size: 12px; }
.m-tools .amber, .snaprow .amber { background: linear-gradient(135deg, transparent 5px, #7a6238 5px) 100% 100% / 7px 7px no-repeat, linear-gradient(#dcae66, #eabf7c); }
.quarter { margin: 2px 4px 0 auto; }
.m-snap { width: 122px; }
.snaprow { display: flex; margin-top: 2px; }
.snaprow .amber { width: 67px; gap: 8px; }
.snaprow .dark { flex: 1; background: #2a2c2e; color: #ddd; border-right: 1px solid #222; font-size: 12px; }
.toby { display: flex; gap: 5px; width: 32px; height: 24px; margin-top: 4px; }
.toby p { font: bold 8px/13px "Liberation Sans", sans-serif; }
.sw { width: 12px; height: 24px; background: linear-gradient(#ddd 11px, #161718 11px); border: 1px solid #222; border-radius: 2px; }
.sq { width: 32px; height: 32px; background: #2b2e30; border-radius: 2px; }

.m-transport { width: 429px; }
.trans { width: 191px; padding: 8px 0 0 1px; display: flex; flex-direction: column; gap: 5px; }
.trans .row { display: flex; gap: 1px; }
.trans .row button { width: 29px; height: 30px; background: linear-gradient(#d6d6d6, #b9babb); }
.trans .row .stop { background: #2c2e30; }
.trans .row .rec { width: 30px; margin-left: auto; border-radius: 2px; }
.trans .seek { background: #2a2c2e; }
.trans .row.seek button { height: 18px; background: none; }
.seekbar { appearance: none; flex: 1; height: 18px; background: linear-gradient(transparent 7px, #151617 7px 11px, transparent 11px); min-width: 0; margin: 0; }
.seekbar::-webkit-slider-thumb { appearance: none; width: 18px; height: 18px; border: 1px solid #1a1b1c; border-radius: 2px; background: linear-gradient(90deg, transparent 7px, #eee 7px 9px, transparent 9px) 0 3px / 16px 10px no-repeat, #444749; }
.lcd { background: linear-gradient(#2e3031, #1e1f20); border: 1px solid #222425; flex: 1; }
.lcd h2 { font-weight: bold; font-size: 12px; line-height: 17px; text-align: center; color: #85888a; margin: 0 4px; }
.clock { flex: none; width: 185px; margin: 0 6px 0 9px; display: flex; flex-direction: column; }
.time { font: bold 23px/41px "Liberation Sans", sans-serif; text-align: center; color: #e6f6fd; margin: 0 4px; border-bottom: 1px solid #3e4142; }
.clockrow { display: flex; flex: 1; padding: 1px 4px; color: #e6f6fd; align-items: center; }
.clockrow span { border-right: 1px solid #3e4142; height: 22px; display: flex; align-items: center; justify-content: center; }
.clockrow .c-icons { width: 41px; gap: 4px; }
.clockrow .c-rate { width: 29px; display: block; line-height: 10px; text-align: right; padding: 1px 4px 0 0; }
.clockrow .c-tempo { width: 64px; font-weight: bold; font-size: 12px; padding-left: 3px; }
.clockrow .c-sig { flex: 1; font-weight: bold; font-size: 12px; border: 0; padding-left: 6px; }
.side { display: flex; flex-direction: column; justify-content: space-between; width: 20px; }
.side button { height: 20px; background: #2b2e30; }
.side .amber { background: #e3b36a; }

.m-loop { width: 140px; gap: 4px; }
.col2 { display: flex; flex-direction: column; gap: 4px; }
.lrow { display: flex; align-items: center; justify-content: space-between; height: 24px; margin: 0 4px; padding: 0 4px 0 0; border-top: 1px solid #3e4142; font-weight: bold; color: #b9bbbc; }
.m-event { width: 248px; }
.erow { display: grid; height: 24px; margin: 0 4px; border-top: 1px solid #3e4142; }
.two { grid-template-columns: 1fr 1fr; }
.three { grid-template-columns: 1fr 1fr 1fr; }
.erow span { padding: 4px 2px; border-left: 1px solid #3e4142; padding-left: 5px; }
.erow span:first-child { border: 0; padding-left: 1px; }
.m-marker { width: 140px; flex-direction: column; }
.m-marker .last { margin-left: 17px; }
.markersel { margin-top: 14px; height: 20px; background: #2b2e30; justify-content: flex-end; padding-right: 7px; }
.m-perf { width: 140px; }
.prow { display: flex; align-items: center; gap: 6px; height: 24px; margin: 0 3px 0 31px; padding-left: 3px; border-left: 1px solid #3e4142; border-top: 1px solid #3e4142; }
.prow > div { flex: 1; }
.prow p { display: flex; justify-content: space-between; font: 7px/11px "DejaVu Sans Condensed", "DejaVu Sans", sans-serif; color: #e8e8e8; }
.prow p span:nth-child(2) { margin-left: 8px; }
.bar { height: 6px; background: #48494a; }
.bar span { display: block; height: 6px; background: #f7cb81; }
.m-mix { width: 158px; display: grid; grid-template-columns: repeat(4, 32px); grid-auto-rows: 20px; gap: 5px 4px; padding-top: 4px; }
.m-mix button { background: #2b2e30; color: #d4d6d7; font: bold 11px/13px "Liberation Sans", sans-serif; border-radius: 2px; }
.m-mix .fx { font-weight: normal; font-size: 12px; }
.m-mix .tiny { font-size: 9px; gap: 1px; }
.m-mix .white { background: #e8e8e8; color: #222; font-size: 12px; }
.m-mix .struck { position: relative; color: #aaa; }
.struck svg { position: absolute; left: 9px; top: 3px; }

/* work area */
.work { display: grid; grid-template-columns: 220px minmax(0, 1fr) 24px; grid-template-rows: 1fr 25px; gap: 5px; padding: 0 3px 5px; min-height: 0; }
.inspector { grid-row: 1 / 3; background: linear-gradient(90deg, #4c4e4f, #505253); border-radius: 5px 5px 4px 4px; display: flex; flex-direction: column; padding: 0 5px; }
.insp-tabs { display: flex; height: 20px; color: #ccc; border-bottom: 1px solid #222; background: linear-gradient(#5a5c5d, #454748); flex: none; }
.insp-tabs button { flex: 1; border-right: 1px solid #222; }
.insp-tabs .wide { flex: none; width: 52px; gap: 6px; justify-content: flex-start; }
.strips { flex: 1; display: flex; gap: 4px; margin-top: 4px; padding: 0 5px 12px; border-top: 4px solid #161718; background: #202122; }
.strip { width: 98px; background: #333536; display: flex; flex-direction: column; }
.strip > section { border-top: 1px solid #7a7d7f; border-bottom: 2px solid #17181a; }
.strip h3 { font-size: 12px; line-height: 21px; color: #808486; }
.strip .s-gain { flex: 1; border-top: 0; display: flex; flex-direction: column; justify-content: flex-end; }
.knobs { display: flex; justify-content: center; padding-bottom: 3px; }
.knobs.pair { justify-content: flex-start; gap: 6px; padding-left: 2px; }
figure { display: flex; flex-direction: column; align-items: center; }
figcaption { white-space: nowrap; line-height: 11px; color: #7d8082; }
figcaption b { color: #dfe8ec; font-weight: normal; margin-left: 7px; font-size: 10px; }
.s-pro { height: 120px; padding: 0 3px; }
.s-pro h3 { padding-left: 9px; }
.preset { height: 20px; background: #212324; color: #bfc6cb; font: 11px/19px "Noto Sans", sans-serif; padding-left: 3px; }
.prorow { display: flex; justify-content: space-between; align-items: center; margin: 3px 1px 0; color: #ddd; }
.prorow button { width: 28px; height: 20px; background: #484b4d; border-radius: 2px; }
.eq { margin: 6px 1px 0; }
.s-fx { height: 47px; padding: 0 4px; }
.shead { display: flex; justify-content: space-between; align-items: center; font-size: 12px; height: 16px; color: #808486; }
.shead i { width: 8px; }
.well { height: 24px; background: #2b2d2e; border: 1px solid #222425; }
.s-sends { height: 85px; }
.s-sends .shead { padding: 0 4px; height: 20px; }
.dim { height: 16px; background: #2d2f30; border-top: 1px solid #292b2c; }
.sendrow { display: flex; align-items: flex-end; justify-content: space-between; height: 45px; padding: 0 4px 2px; opacity: .3; }
.sendrow figure { justify-content: flex-end; }
.sendrow figure:first-child { gap: 9px; }
.sendrow figure:last-child { gap: 5px; }
.sendrow figcaption { color: #b5b7b8; line-height: 8px; }
.s-mix { height: 314px; padding: 3px 3px 0; }
.btngrid { display: grid; grid-template-columns: repeat(4, 20px); grid-template-rows: 20px 20px; gap: 4px; }
.btngrid button, .tb button, .lanes button { width: 20px; height: 20px; background: #4b4e50; color: #d6d8da; font: bold 11px/13px "Liberation Sans", sans-serif; border-radius: 1px; }
.btngrid .white, .tb .white { background: #d9d9db; color: #222; }
.w sub { font: 8px/8px "Liberation Sans", sans-serif; color: #222; margin: 7px -2px 0 -2px; }
.btngrid .w, .tb .w { font-weight: normal; font-size: 12px; }
.tb .reg { font-size: 12px; font-weight: normal; }
.pan { padding-top: 5px; }
.faderrow { display: flex; margin: 6px 0 0 -3px; height: 142px; }
.fader { appearance: none; writing-mode: vertical-lr; direction: rtl; width: 20px; height: 138px; margin: 1px 5px 0 0; background: linear-gradient(90deg, transparent 8px, #18191a 8px 12px, transparent 12px); }
.fader::-webkit-slider-thumb { appearance: none; width: 20px; height: 29px; border: 1px solid #292a2b; border-radius: 2px; background: linear-gradient(#606466, #4a4d4f 13px, #e8f6fb 13px 16px, #56595b 16px, #7a7d7f); }
.fader.teal::-webkit-slider-thumb { background: linear-gradient(#2d5763, #35616e 13px, #e8f6fb 13px 16px, #2d5560 16px, #4b7c8a); }
.scale-text, .meter-text, .gut-text { text-anchor: end; fill: #96999b; font: 10px "Liberation Sans", sans-serif; }
.meter-text { font-size: 8px; fill: #85888a; }
.gut-text { font-size: 9px; fill: #77797a; }
.s-mix output { display: block; text-align: center; color: #d5d8da; font: 11px/22px "Liberation Sans", sans-serif; padding-top: 1px; }
.trackicon { width: 30px; height: 30px; margin: 6px auto 0; background: #2b2c2d; display: grid; place-items: center; }
.strip .s-io { height: 65px; padding: 0 3px; border-bottom-width: 1px; }
.s-io h3 { text-align: center; line-height: 19px; }
.combo { display: flex; align-items: center; gap: 2px; height: 20px; padding: 0 4px 0 3px; background: #4a4d4f; color: #d8dadb; font: 11px/16px "Noto Sans", sans-serif; border-radius: 1px; }
.combo select { appearance: none; flex: 1; min-width: 0; outline: 0; padding-left: 1px; overflow: hidden; }
.s-io .combo { margin-bottom: 2px; }
.single .combo { margin-top: 2px; }
.single .combo svg { margin-left: 4px; }
.badge { width: 10px; height: 10px; background: #999b9c; color: #444; font: bold 8px/10px "Liberation Sans", sans-serif; text-align: center; border-radius: 2px; flex: none; }
.strip .s-name { border-top: 0; border-bottom: 1px solid #7a7d7f; height: 44px; padding: 3px 4px; }
.s-name strong { display: block; background: #212324; color: #eaf4f8; font-size: 12px; line-height: 18px; text-align: center; }
.num { display: block; margin-top: 3px; height: 17px; text-align: center; line-height: 15px; border: 1px solid #27292a; color: #aaa; }
.num.orange { background: #cd8843; color: #222; }
.display { width: 103px; height: 20px; margin: 4px 0 0 1px; background: #36383a; color: #e0e3e5; justify-content: flex-end; gap: 20px; padding-right: 6px; flex: none; font-size: 12px; }

/* track view */
.tracks { position: relative; display: flex; flex-direction: column; background: #4a4c4d; border-radius: 5px; }
.tv-menu { display: flex; height: 20px; padding-left: 6px; background: linear-gradient(#5a5c5e, #48494b); border-bottom: 1px solid #626466; border-radius: 5px 5px 0 0; font: 12px/18px "Noto Sans", sans-serif; color: #b4b7b9; }
.tv-menu > button { width: 79px; padding-right: 16px; border: solid #2c2e2f; border-width: 0 1px 1px 0; position: relative; white-space: nowrap; }
.tv-menu > button::after { content: ""; position: absolute; right: 4px; top: 9px; border: 3px solid transparent; border-top-color: #c0c2c4; }
.tv-right { margin-left: auto; display: flex; margin-right: 21px; font-size: 11px; }
.xfade { width: 29px; background: #cd8843; border: 1px solid #222; padding-right: 5px; }
.off { width: 85px; gap: 9px; padding: 0 1px 0 4px; border-right: 1px solid #2c2e2f; border-bottom: 1px solid #2c2e2f; }
.off span { flex: 1; text-align: left; }
.corner { align-self: flex-end; margin-bottom: 2px; }
.tv-grid { flex: 1; display: grid; grid-template-columns: 400px 23px minmax(0, 1fr) 20px; grid-template-rows: 59px 1fr 25px; }
.th-left { display: flex; gap: 7px; padding: 7px 1px 0 7px; }
.th-left button { width: 24px; height: 24px; background: #2f3132; }
.custom { margin-left: auto; width: 115px; height: 24px; background: #303234; color: #bfc3c6; padding-left: 4px; }
.gutter { grid-row: 1 / 4; grid-column: 2; background: #48494b; padding-top: 79px; border-left: 1px solid #3d3f40; }
.gutter .gut-text { fill: #6d7072; }
.ruler { position: relative; padding-top: 4px; }
.rscale { display: flex; height: 31px; border: 1px solid #9a9d9f; border-left: 0; background: linear-gradient(#3c4041 23px, #8d9092 23px 24px, #3f4243 24px); margin-right: 1px; overflow: hidden; }
.rscale span { flex: 0 0 18.5%; padding: 10px 0 0 2px; height: 24px; font: 10px/14px "Noto Sans", sans-serif; color: #c8cbcd; background: repeating-linear-gradient(90deg, #8d9092 0 1px, transparent 1px 25%) 0 100% / 100% 4px no-repeat; }
.playhead { position: absolute; left: -11px; top: 1px; z-index: 2; }
.th-right { padding: 20px 0 0 2px; }
.th-right button { width: 14px; height: 14px; background: #333; }
.tlist { grid-row: 2; grid-column: 1; margin: 0 1px 4px 3px; background: #202020; border-right: 1px solid #111; border-top: 1px solid #222; }
.track { display: flex; border-left: 9px solid #282a2b; background: #333536; border-bottom: 2px solid #141516; padding: 1px 0 3px 3px; }
.t1 { height: 100px; }
.t2 { height: 148px; border-top: 1px solid #555; padding-top: 0; }
.tcontrols { display: grid; grid-template-columns: 56px 92px 93px; grid-template-rows: 20px 20px 19px 1fr; gap: 4px; width: 249px; }
.tidx { display: flex; gap: 4px; align-items: center; }
.tnum { width: 34px; height: 18px; background: #cd8843; color: #222; text-align: center; line-height: 18px; font-size: 12px; }
.tname { width: 91px; height: 18px; margin: 1px 0 0 1px; padding-left: 2px; background: #252728; color: #dcdfe1; font: bold 11px/18px "Liberation Sans", sans-serif; border-radius: 1px; }
.tname.sel { background: #e6bb78; color: #2a2a2a; }
.tb { display: flex; gap: 4px; margin-left: 1px; }
.tb button { flex: none; }
.io { height: 18px; margin-top: 1px; }
.open { background: #8d6a47; }
.open::after {
  content: ""; position: absolute; inset: -1px;
  background:
    linear-gradient(#eee 0 0) 0 0 / 4px 1px, linear-gradient(#eee 0 0) 0 0 / 1px 4px,
    linear-gradient(#eee 0 0) 100% 0 / 4px 1px, linear-gradient(#eee 0 0) 100% 0 / 1px 4px,
    linear-gradient(#eee 0 0) 0 100% / 4px 1px, linear-gradient(#eee 0 0) 0 100% / 1px 4px,
    linear-gradient(#eee 0 0) 100% 100% / 4px 1px, linear-gradient(#eee 0 0) 100% 100% / 1px 4px;
  background-repeat: no-repeat; pointer-events: none;
}
.open > svg { color: #111; }
.outwrap { position: relative; margin-left: 1px; }
.outwrap .open { position: relative; }
.lanes { grid-column: 1 / 4; grid-row: 4; display: flex; gap: 4px; align-self: end; }
.bigicon { grid-row: 2 / 5; grid-column: 1; width: 47px; height: 47px; margin: 2px 0 0 6px; background: #28292a; display: grid; place-items: center; }
.fxcol { width: 105px; padding-left: 5px; }
.up { margin: 4px 0 8px 84px; }
.fxbin { width: 94px; height: 66px; background: #2b2d2e; border: 1px solid #222425; border-radius: 4px 4px 0 0; display: flex; align-items: flex-start; gap: 5px; padding: 2px 3px; font: 11px/13px "Noto Sans", sans-serif; color: #c8cbcd; }
.fxbin svg { margin-top: 2px; }
.fxbin span { flex: 1; }

/* output menu */
.popup { position: absolute; left: 93px; top: 20px; z-index: 5; width: 258px; padding: 3px 1px 1px 2px; list-style: none; background: #f0f0f0; border: 1px solid #aaa; box-shadow: 3px 3px 3px rgba(0, 0, 0, .6); color: #000; font: 12px/20px "Noto Sans", sans-serif; }
.popup li { display: flex; justify-content: space-between; height: 20px; padding: 0 4px 0 23px; background: linear-gradient(90deg, #f0f0f0, #cfcfcf) 0 0 / 20px 100% no-repeat; white-space: nowrap; }
.popup .sep { height: 10px; background: linear-gradient(transparent 4px, #999 4px 5px, #fff 5px 6px, transparent 6px); }
.popup .checked { justify-content: flex-start; padding-left: 2px; gap: 5px; align-items: center; }
.popup .hot { background: linear-gradient(90deg, #b5d8f8, #78bfff 22px); }

.clips { position: relative; grid-column: 3; grid-row: 2; background: #202020; margin-bottom: 4px; overflow: hidden; border-top: 1px solid #1a1b1c; }
.clips::before, .ruler::before { content: ""; position: absolute; left: 0; top: 0; bottom: 0; width: 1px; background: #eee; z-index: 1; }
.lane { display: flex; background: #38393b; border-top: 1px solid #555; border-bottom: 2px solid #1b1c1d; }
.l1 { height: 100px; }
.l2 { height: 148px; border-bottom: 0; }
.lane i { flex: 0 0 18.5%; background: linear-gradient(90deg, #111 0 1px, transparent 1px), repeating-linear-gradient(90deg, #252627 0 1px, transparent 1px 25%), repeating-linear-gradient(90deg, #2f3031 0 1px, transparent 1px 6.25%); }
.vscroll { grid-column: 4; grid-row: 2; display: flex; flex-direction: column; align-items: center; padding: 4px 2px 2px; margin-bottom: 4px; gap: 3px; }
.vthumb { flex: 1; width: 12px; background: #bdbdbd; margin: 2px 0; }
.vscroll .zbox { width: 10px; height: 6px; background: #c4c4c4; }
.foot-left { grid-row: 3; grid-column: 1; border-top: 1px solid #000; display: flex; justify-content: flex-end; }
.foot-left button { width: 19px; height: 20px; margin-top: 2px; background: #2f3132; }
.foot-right { grid-row: 3; grid-column: 3 / 5; border-top: 2px solid #000; display: flex; align-items: flex-start; padding: 2px 22px 0 8px; }
.foot-right > svg { margin-top: 4px; }
.hthumb { width: 15px; height: 16px; background: #bdbdbd; margin-left: 5px; }
.hz { margin-left: auto; display: flex; align-items: center; gap: 4px; }
.hz > svg { margin-right: 9px; }
.zslider { width: 7px; height: 16px; background: linear-gradient(#3c3e3f 10px, #c4c4c4 10px); }
.scribble { position: absolute; left: 112px; top: 113px; z-index: 6; pointer-events: none; }

/* right dock and bottom bar */
.browser { background: #4a4c4d; border-radius: 5px; display: flex; flex-direction: column; align-items: center; gap: 9px; padding-bottom: 8px; }
.browser button { width: 24px; height: 19px; border-bottom: 1px solid #ccc; margin-bottom: -3px; }
.q { font: bold 18px/18px "Liberation Sans", sans-serif; color: #7c7e80; }
.vert { margin-top: auto; writing-mode: vertical-rl; transform: rotate(180deg); font: bold 13px/14px "Noto Sans", sans-serif; color: #c6c8ca; white-space: nowrap; }
.console { grid-column: 2 / 4; display: flex; background: #4a4c4d; border-radius: 5px 5px 0 0; }
.console button { width: 87px; gap: 12px; color: #c0c3c6; font-weight: bold; font-size: 13px; background: linear-gradient(#55575a, #48494b); border-radius: 5px 0 4px 4px; padding: 5px 0 0 7px; }
.console div { flex: 1; margin-top: 5px; border: solid #2b2d2e; border-width: 1px 0 0 2px; display: flex; justify-content: flex-end; align-items: center; padding-right: 12px; box-shadow: inset 0 1px #606264; }

/* taskbar */
.taskbar { display: flex; background: linear-gradient(90deg, #223a42, #21353f 35%, #1b2a42 70%, #19253f); color: #fff; }
.tk { width: 40px; height: 40px; margin-right: 9px; border-bottom: 2px solid transparent; }
.tk:first-child { width: 48px; margin-right: 7px; }
.tk.run { border-color: #76b9ed; }
.tk.act { width: 48px; margin-left: -4px; background: #4c6067; }
.tray { margin-left: auto; display: flex; align-items: center; gap: 8px; padding-right: 19px; margin-right: 4px; border-right: 1px solid #5c6675; font: 12px/18px "Open Sans", "Noto Sans", sans-serif; }
.lang { margin-left: 2px; }
.tray time { font-size: 11px; text-align: center; margin: 0 8px 0 4px; }
```
